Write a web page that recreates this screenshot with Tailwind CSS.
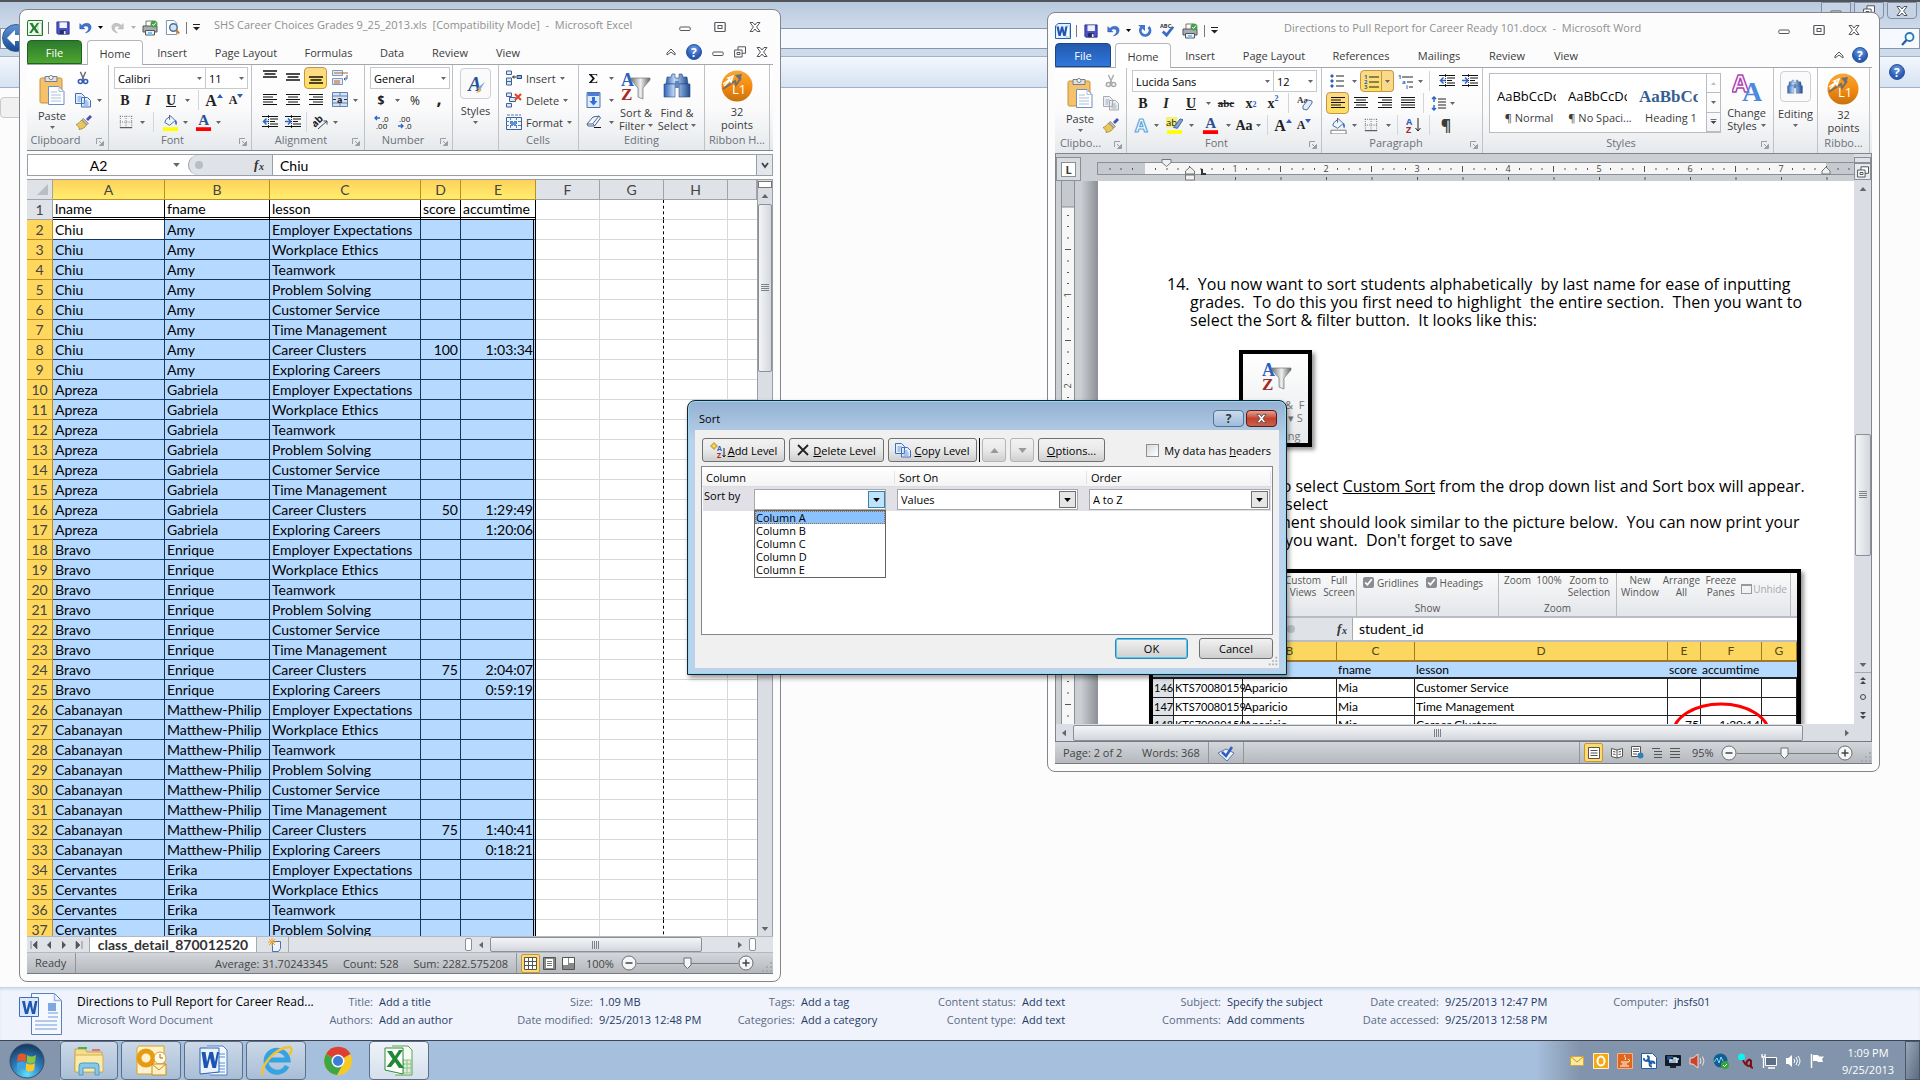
<!DOCTYPE html>
<html lang="en">
<head>
<meta charset="utf-8">
<title>Desktop</title>
<script src="https://cdn.jsdelivr.net/npm/@tailwindcss/browser@4"></script>
</head>
<body class="h-screen overflow-hidden bg-[#fcfcfc] font-['Open_Sans','Noto_Sans',sans-serif] text-[11px] leading-[13px] text-[#3b3b3b]">

<!-- shared gradients and ruler patterns -->
<svg class="absolute size-0" xmlns="http://www.w3.org/2000/svg">
 <defs>
  <linearGradient id="gFun" x1="0" x2="1"><stop offset="0" stop-color="#777"/><stop offset=".5" stop-color="#eee"/><stop offset="1" stop-color="#666"/></linearGradient>
  <linearGradient id="gBlue" x1="0" x2="1"><stop offset="0" stop-color="#2f62b5"/><stop offset=".4" stop-color="#c3dcf8"/><stop offset="1" stop-color="#1f4a94"/></linearGradient>
  <linearGradient id="gOr" x1="0" y1="0" x2="0" y2="1"><stop offset="0" stop-color="#f6a73a"/><stop offset=".5" stop-color="#f58b0d"/><stop offset="1" stop-color="#c9710f"/></linearGradient>
  <radialGradient id="gHelp" cx=".5" cy=".3"><stop offset="0" stop-color="#6fa0e8"/><stop offset="1" stop-color="#2b5cb3"/></radialGradient>
  <radialGradient id="gOrb" cx=".5" cy=".9" r=".9"><stop offset="0" stop-color="#5fe0ff"/><stop offset=".5" stop-color="#2c7bb8"/><stop offset="1" stop-color="#14365c"/></radialGradient>
  <pattern id="pRuler" width="91" height="12" patternUnits="userSpaceOnUse">
   <path d="M11.5 5v2M23 5v2M34 5v2M57 5v2M68 5v2M79.500 5v2" stroke="#555" stroke-width="1"/><path d="M45.500 3v6" stroke="#555"/>
  </pattern>
  <pattern id="pTabs" width="45.500" height="4" patternUnits="userSpaceOnUse"><path d="M.5 0v4" stroke="#555"/></pattern>
  <pattern id="pV" width="12" height="91" patternUnits="userSpaceOnUse">
   <path d="M5 11.500h2M5 22.500h2M5 34h2M5 57h2M5 68.500h2M5 79.500h2M3 45.500h6" stroke="#555"/>
  </pattern>
 </defs>
</svg>
<!-- icon library -->
<svg class="hidden" xmlns="http://www.w3.org/2000/svg">
 <symbol id="car" viewBox="0 0 5 3"><path d="M0 0h5L2.500 3z" fill="#666"/></symbol>
 <symbol id="launch" viewBox="0 0 8 8"><path d="M.5 6V.5H6" fill="none" stroke="#9a9da2"/><path d="M3 3l3 3M7.500 3.500v4h-4z" stroke="#9a9da2" fill="#9a9da2"/></symbol>
 <symbol id="xl" viewBox="0 0 16 16"><path d="M1 .5h14.500v15H.5V3z" fill="#eef7ea" stroke="#1e7a2d"/><path d="M11 3h3.500v11H11z" fill="#fff" stroke="#7fb77f" stroke-width=".6"/><path d="M2.500 3h3l2 3.500L10 3h2L8.800 8l3.200 5H9L7 9.600 4.500 13H2.200L5.600 8z" fill="#1f7e2f"/></symbol>
 <symbol id="wd" viewBox="0 0 16 16"><path d="M.5 3L3 .5h12.500v15H.5z" fill="#e6f0fc" stroke="#2560b4"/><path d="M11 3h3.500v11H11z" fill="#fff" stroke="#8ab0e0" stroke-width=".6"/><path d="M1.500 3.500h2.300l1 5.500 1.300-5.500h2L9.300 9l1.100-5.500h2.200L10.500 13H8.300L7 8l-1.400 5H3.500z" fill="#1f56b0"/></symbol>
 <symbol id="xlbig" viewBox="0 0 32 32"><path d="M9 1h16l4 4v25H12" fill="#f4fbf2" stroke="#5aa05a"/><path d="M20 15h8v13h-8z" fill="#dff0da" stroke="#8cc08a"/><path d="M20 19h8M20 23h8M24 15v13" stroke="#8cc08a"/><path d="M2 3h18v26L2 25z" fill="#fff" stroke="#2e8b3b"/><path d="M4 6h5l3 5 4-6h4l-6 8.500L21 23h-5l-4-6-4 5H3.500L9.500 14z" fill="#1f8a35"/></symbol>
 <symbol id="wdbig" viewBox="0 0 32 32"><path d="M9 1h16l4 4v25H12" fill="#f4f8ff" stroke="#4f7fc4"/><path d="M20 9h7M20 12h7M20 18h7M20 21h7M20 24h7M16 27h11" stroke="#8fb1e2" stroke-width="1.500"/><path d="M2 3h19v24L2 29z" fill="#eaf2fd" stroke="#2a62b8"/><path d="M3.500 7h4l1.500 10 2.500-10H15l2 10L19 7h2l-3 16h-3.500L12 13 9.500 23H6z" fill="#1c54b2"/></symbol>
 <symbol id="save" viewBox="0 0 16 16"><path d="M1 1h14v14H2l-1-1z" fill="#4a52c4" stroke="#2b2f86"/><path d="M4 1.500h8.500V8H4z" fill="#f0f3ff"/><path d="M4.500 10.500h7V15h-7z" fill="#222b62"/><path d="M9 11.500h2V15H9z" fill="#dfe4fa"/></symbol>
 <symbol id="undo" viewBox="0 0 16 16"><path d="M2 3v6h6L6 7c2-2 6-1.500 6 1.500 0 2-1.500 3.500-3.500 5 4-.5 6.500-3 6.500-6.500C15 2.500 9 1 4.500 5z" fill="#3f74cf" stroke="#2a58a8" stroke-width=".5"/></symbol>
 <symbol id="redo" viewBox="0 0 16 16"><path d="M14 3v6H8l2-2C8 5 4 5.500 4 8.500c0 2 1.500 3.500 3.500 5C3.500 13 1 10.500 1 7 1 2.500 7 1 11.500 5z" fill="#c3c5c8" stroke="#a5a8ac" stroke-width=".5"/></symbol>
 <symbol id="repeat" viewBox="0 0 16 16"><path d="M4 4a5.500 5.500 0 1 0 8-.5" fill="none" stroke="#3f74cf" stroke-width="3.200"/><path d="M0 1h8v7z" fill="#3f74cf"/></symbol>
 <symbol id="print" viewBox="0 0 16 16"><path d="M4 1h7v6H4z" fill="#fff" stroke="#777"/><path d="M1 6h14v6H1z" fill="#a9adb3" stroke="#555"/><path d="M3.500 10.500h9V15h-9z" fill="#e8f1fb" stroke="#555"/><path d="M6 12h4v3H6z" fill="#7fc4ef"/><circle cx="12" cy="4" r="3.500" fill="#44a047"/><path d="M10.300 4l1.300 1.500L14 2.500" stroke="#fff" fill="none"/></symbol>
 <symbol id="preview" viewBox="0 0 16 16"><path d="M1.500.5h8l3 3v12h-11z" fill="#fff" stroke="#7a8aa6"/><circle cx="9" cy="8" r="4" fill="#cfe6fa" stroke="#4e6c96" stroke-width="1.500"/><path d="M12 11l3 3.500" stroke="#c8832c" stroke-width="2.500"/></symbol>
 <symbol id="abc" viewBox="0 0 16 16"><text x="0" y="5" font-size="6" font-weight="700" fill="#333">ABC</text><path d="M3 9l4 4 7-9" fill="none" stroke="#3a6bc4" stroke-width="3"/></symbol>
 <symbol id="paste" viewBox="0 0 26 30"><rect x="1" y="3" width="22" height="25" rx="1.500" fill="#f3c26a" stroke="#c98f36"/><path d="M6 1.500h12v5H6z" fill="#dfe1e4" stroke="#7a7d82"/><circle cx="12" cy="2.500" r="2" fill="#fff" stroke="#7a7d82"/><path d="M9.500 11.500h10.500l5 5v13H9.500z" fill="#fff" stroke="#6f8fbe"/><path d="M20 11.500v5h5M12 17h6M12 20h10M12 23h10M12 26h10" fill="none" stroke="#a9bddc"/></symbol>
 <symbol id="cut" viewBox="0 0 16 16"><path d="M5 1l4 9M11 1L7 10" stroke="currentColor" stroke-width="1.500"/><circle cx="5" cy="12" r="2.300" fill="none" stroke="var(--c,#2e5cb8)" stroke-width="1.800"/><circle cx="11" cy="12" r="2.300" fill="none" stroke="var(--c,#2e5cb8)" stroke-width="1.800"/></symbol>
 <symbol id="copy" viewBox="0 0 16 16"><path d="M.5 1.500h6l3 3v7h-9zM6.500 5.500h6l3 3v6.500h-9z" fill="#e7effb" stroke="var(--c,#3d6fc0)"/><path d="M2.500 5h4M2.500 7h3M2.500 9h3M8.500 9h4M8.500 11h5M8.500 13h5" stroke="var(--c,#6b96d8)"/></symbol>
 <symbol id="brush" viewBox="0 0 16 16"><path d="M10 5l4-4 2 2-4 4z" fill="#4b4fae"/><path d="M7.500 4.500l5 5-2 1.500-5-5z" fill="#bbb" stroke="#555" stroke-width=".5"/><path d="M5.500 6l5 5C9 14 5 15.500 3 15.500 4 14 1 11 0 10.500 2 10 4 8 5.500 6z" fill="#e8c85a" stroke="#8a6d1c" stroke-width=".6"/></symbol>
 <symbol id="bord" viewBox="0 0 16 16"><path d="M1 1.500h14M1 8h14M1.500 1v13M8 1v13M14.500 1v13" stroke="#555" stroke-dasharray="1 1.500"/><path d="M1 14.500h14" stroke="#222"/></symbol>
 <symbol id="bucket" viewBox="0 0 18 18"><path d="M4 6l5-4 5 5-6 5-5-3z" fill="#eef4fb" stroke="#3c68a8"/><path d="M14 6c2 1 2.500 4 1 6-1-1-1.500-3-1-6z" fill="#2f6bc0"/><path d="M8 1v5" stroke="#555"/><path d="M1 14h16v4H1z" fill="var(--c,#ff0)" stroke="var(--s,none)"/></symbol>
 <symbol id="fcol" viewBox="0 0 18 18"><text x="3.500" y="12" font-family="Liberation Serif" font-weight="700" font-size="16" fill="#2c4f93">A</text><path d="M1 14h16v4H1z" fill="#f00"/></symbol>
 <symbol id="vtop" viewBox="0 0 14 10"><path d="M0 1h14M1.500 4h11M0 7h14" stroke="#111" stroke-width="1.500"/></symbol>
 <symbol id="al" viewBox="0 0 14 12"><path d="M0 .5h14M0 3h10M0 5.500h14M0 8h10M0 10.500h14" stroke="#111"/></symbol>
 <symbol id="ac" viewBox="0 0 14 12"><path d="M0 .5h14M2 3h10M0 5.500h14M2 8h10M0 10.500h14" stroke="#111"/></symbol>
 <symbol id="ar" viewBox="0 0 14 12"><path d="M0 .5h14M4 3h10M0 5.500h14M4 8h10M0 10.500h14" stroke="#111"/></symbol>
 <symbol id="aj" viewBox="0 0 14 12"><path d="M0 .5h14M0 3h14M0 5.500h14M0 8h14M0 10.500h14" stroke="#111"/></symbol>
 <symbol id="wrap" viewBox="0 0 16 16"><path d="M.5.5h10v5H.5zM.5 8.500h10v6H.5z" fill="#e3ecf8" stroke="#7f98bb"/><path d="M2 3h14M2 11h6M2 13h6" stroke="#b0622e"/><path d="M15 5v4h-3m1.500-1.500L12 9l1.500 1.500" fill="none" stroke="#3c5f9c"/></symbol>
 <symbol id="merge" viewBox="0 0 16 16"><path d="M.5.5h15v14H.5z" fill="#d5e3f5" stroke="#5f81b5"/><path d="M.5 4h15M.5 11h15M8 0v4M8 11v4" stroke="#5f81b5"/><text x="5" y="10.500" font-size="9" font-weight="700" fill="#222">a</text><path d="M1 7.500h3M12 7.500h3" stroke="#333"/></symbol>
 <symbol id="ind0" viewBox="0 0 16 14"><path d="M0 1.500h16M8 4h8M8 6.500h5M8 9h8M0 11.500h16" stroke="#111"/><path d="M7 6.500H2m2.500-3L1.500 6.500l3 3" stroke="#2f66c4" stroke-width="1.500" fill="none"/><path d="M6.500 0v14" stroke="#333" stroke-dasharray="1 1"/></symbol>
 <symbol id="ind1" viewBox="0 0 16 14"><path d="M0 1.500h16M8 4h8M8 6.500h5M8 9h8M0 11.500h16" stroke="#111"/><path d="M0 6.500h5m-2-3l3 3-3 3" stroke="#2f66c4" stroke-width="1.500" fill="none"/><path d="M6.500 0v14" stroke="#333" stroke-dasharray="1 1"/></symbol>
 <symbol id="orient" viewBox="0 0 16 16"><text transform="rotate(-45 7 9)" x="0" y="9" font-size="10" font-weight="700" fill="#222">ab</text><path d="M5 15l9-8m-3.500 0H14v3.500" fill="none" stroke="#444"/></symbol>
 <symbol id="dec0" viewBox="0 0 16 14"><path d="M6 3H1m2-2L1 3l2 2" stroke="#2f66c4" stroke-width="1.300" fill="none"/><text x="8" y="6.500" font-size="8" fill="#111">.0</text><text x="2" y="14" font-size="8" fill="#111">.00</text></symbol>
 <symbol id="dec1" viewBox="0 0 16 14"><path d="M1 11h5m-2-2l2 2-2 2" stroke="#2f66c4" stroke-width="1.300" fill="none"/><text x="2" y="6.500" font-size="8" fill="#111">.00</text><text x="8" y="14" font-size="8" fill="#111">.0</text></symbol>
 <symbol id="styA" viewBox="0 0 18 18"><text x="2" y="15" font-family="Liberation Serif" font-style="italic" font-weight="700" font-size="18" fill="#24519c">A</text><path d="M10 13l7-6-4 7z" fill="#7aa7e4"/><path d="M9 17c3 0 4-1 5-3l-2-1c-1 1-2 3-3 4z" fill="#e0b64a"/></symbol>
 <symbol id="cins" viewBox="0 0 16 16"><path d="M.5 1h5v3.500h-5zM.5 8h5v3.500h-5zM.5 11.500h5V15h-5z" fill="#dbe7f7" stroke="#3e5f95"/><path d="M11 5.500h4.500v3H11z" fill="#8db4ea" stroke="#22488a"/><path d="M10 7H7m1-1.500L6.500 7 8 8.500" stroke="#111" fill="none"/></symbol>
 <symbol id="cdel" viewBox="0 0 16 16"><path d="M.5 1h5v3.500h-5zM3.500 5.500h6v4h-6zM.5 11.500h5V15h-5z" fill="#dbe7f7" stroke="#3e5f95"/><path d="M9 2l6 6M15 2L9 8" stroke="#e3401f" stroke-width="2"/></symbol>
 <symbol id="cfmt" viewBox="0 0 16 16"><path d="M.5 3.500h15v12H.5z" fill="#f1f6fc" stroke="#3e5f95"/><path d="M0 7.500h16M0 11.500h16M4.500 3v13M10.500 3v13M1 1h14" stroke="#5a7fb8" stroke-dasharray="3 1"/><path d="M5 8h5v3H5z" fill="#5a92e0"/></symbol>
 <symbol id="sum" viewBox="0 0 12 12"><path d="M1 1h9v3L9 2H4l3.500 4L4 10h5l1-2v3H1v-.5L5 6 1 1.500z" fill="#111"/></symbol>
 <symbol id="filld" viewBox="0 0 14 16"><path d="M.5.5h13v15H.5z" fill="#dfeafa" stroke="#4c74b4"/><path d="M1 1h12v3H1z" fill="#4c7fd0"/><path d="M5.500 5h3v4H11l-4 4.500L3 9h2.500z" fill="#2f6fd6"/></symbol>
 <symbol id="erase" viewBox="0 0 16 14"><path d="M1 9l6-7 6-1 1.500 2-6 8H2z" fill="#f4f7fc" stroke="#4b6490"/><path d="M1 9h5.500l6.500-8M7 9l1.500 2" fill="none" stroke="#4b6490"/><path d="M8 12.500h7" stroke="#111"/></symbol>
 <symbol id="sort" viewBox="0 0 30 30"><text x="0" y="14" font-family="Liberation Serif" font-weight="700" font-size="18" fill="#2b5fc0">A</text><text x="0" y="28" font-family="Liberation Serif" font-weight="700" font-size="17" fill="#a32a22">Z</text><path d="M10 6h19v2l-7 8v11l-5-2V16l-7-8z" fill="url(#gFun)" stroke="#777" stroke-width=".7"/></symbol>
 <symbol id="bino" viewBox="0 0 28 28"><path d="M4 5h4l1-3h3v4h4V2h3l1 3h4l1 7H3z" fill="url(#gBlue)" stroke="#284a80" stroke-width=".6"/><path d="M1 12h11v13H1zM16 12h11v13H16z" fill="url(#gBlue)" stroke="#284a80" stroke-width=".6"/><path d="M12 9h4v7h-4z" fill="#5f86c2"/></symbol>
 <symbol id="l1" viewBox="0 0 32 32"><circle cx="16" cy="16" r="15.500" fill="url(#gOr)"/><path d="M2 19L14 11l1 4 5-7" fill="none" stroke="#70706e" stroke-width="2"/><path d="M14 5l7-1-2 7z" fill="#70706e"/><path d="M2 14l7-5-2-1 5-2-2 6-1-2-6 6" fill="none" stroke="#fff" stroke-width="1.500"/><text x="11" y="24" font-size="13" fill="#fff">L1</text></symbol>
 <symbol id="help" viewBox="0 0 16 16"><circle cx="8" cy="8" r="7.500" fill="url(#gHelp)" stroke="#2a55a5"/><text x="5" y="12.500" font-size="12" font-weight="700" fill="#fff">?</text></symbol>
 <symbol id="chev" viewBox="0 0 10 8"><path d="M1 5l4-4 4 4v2L5 4 1 7z" fill="#fff" stroke="#555"/></symbol>
 <symbol id="wmin" viewBox="0 0 12 12"><rect x=".8" y="6" width="10.400" height="3.500" rx="1" fill="#fff" stroke="#53565c"/></symbol>
 <symbol id="wmax" viewBox="0 0 12 12"><rect x=".8" y="1.500" width="10.400" height="9" rx="1" fill="#fff" stroke="#53565c" stroke-width="1.200"/><rect x="4" y="4.500" width="4" height="3" fill="#fff" stroke="#53565c"/></symbol>
 <symbol id="wres" viewBox="0 0 12 12"><path d="M4 .8h7.500v6.500H4z" fill="#fff" stroke="#53565c"/><path d="M.6 4h7.500v7H.6z" fill="#fff" stroke="#53565c"/><path d="M3 6.500h3v2H3z" fill="#fff" stroke="#53565c"/></symbol>
 <symbol id="wx" viewBox="0 0 12 12"><path d="M1 1.500h3L6 4l2-2.500h3L7.600 6l3.400 4.500H8L6 8l-2 2.500H1L4.400 6z" fill="#fff" stroke="#53565c"/></symbol>
 <symbol id="bul" viewBox="0 0 14 14"><path d="M1 1h2v2H1zM1 6h2v2H1zM1 11h2v2H1z" fill="#2f5fb8" stroke="#2f5fb8"/><path d="M6 2h8M6 7h8M6 12h8" stroke="#222"/></symbol>
 <symbol id="num" viewBox="0 0 15 15"><g font-size="6" font-weight="700" fill="#2f5fb8"><text y="5">1</text><text y="10">2</text><text y="15">3</text></g><path d="M5 3h10M5 8h10M5 13h10" stroke="#222"/></symbol>
 <symbol id="mul" viewBox="0 0 16 15"><g font-size="6" font-weight="700" fill="#2f5fb8"><text y="5">1</text><text x="4" y="10">a</text><text x="8" y="15">i</text></g><path d="M4 3h11M9 8h6M11 13h4" stroke="#222"/></symbol>
 <symbol id="spc" viewBox="0 0 15 15"><path d="M3 1v5M3 9v5M1 3l2-2 2 2M1 12l2 2 2-2" stroke="#2f66c4" fill="none" stroke-width="1.500"/><path d="M7 3h8M7 6h8M7 9h8M7 12h8" stroke="#222"/></symbol>
 <symbol id="az" viewBox="0 0 15 16"><text y="8" font-size="9" font-weight="700" fill="#2b5fc0">A</text><text y="16" font-size="9" font-weight="700" fill="#a32a22">Z</text><path d="M12 1v13m-2.500-3l2.500 3 2.500-3" stroke="#222" fill="none"/></symbol>
 <symbol id="fx" viewBox="0 0 14 14"><text x="1" y="11" font-family="Liberation Serif" font-style="italic" font-weight="700" font-size="13" fill="#333">f</text><text x="6" y="12" font-family="Liberation Serif" font-style="italic" font-weight="700" font-size="10" fill="#333">x</text></symbol>
 <symbol id="mag" viewBox="0 0 14 14"><circle cx="8.500" cy="5" r="4" fill="none" stroke="#2a7ab8" stroke-width="1.800"/><path d="M5.500 8L1 13" stroke="#2a5ba0" stroke-width="2.200"/></symbol>
 <symbol id="minus" viewBox="0 0 16 16"><circle cx="8" cy="8" r="7" fill="#f5f6f7" stroke="#6b6e73"/><path d="M4.500 8h7" stroke="#444" stroke-width="1.500"/></symbol>
 <symbol id="plus" viewBox="0 0 16 16"><circle cx="8" cy="8" r="7" fill="#f5f6f7" stroke="#6b6e73"/><path d="M4.500 8h7M8 4.500v7" stroke="#444" stroke-width="1.500"/></symbol>
 <symbol id="grip" viewBox="0 0 8 8"><path d="M.5 0v8M2.500 0v8M4.500 0v8M6.500 0v8" stroke="#7d8188"/></symbol>
 <symbol id="size" viewBox="0 0 12 12"><path d="M9 1h2v2H9zM5 5h2v2H5zM9 5h2v2H9zM1 9h2v2H1zM5 9h2v2H5zM9 9h2v2H9z" fill="#a8abb0"/></symbol>
 <symbol id="docW" viewBox="0 0 44 42"><path d="M12.500.5h23l7 7v34h-30z" fill="#f5f9ff" stroke="#5b7fb8"/><path d="M35.500.5v7h7M16 28h22M16 32h22M16 36h22M29 20h10M29 24h10" fill="none" stroke="#9db9e4" stroke-width="1.500"/><path d="M29 10h8v8h-8z" fill="#7ea8e0"/><path d="M.5 4.500h19v19H.5z" fill="#dce9fa" stroke="#3b71c0"/><path d="M3 8h3l1.500 9L10 8h2.500l1.500 9 2-9h2.500L16 21h-3l-2-8-2 8H6z" fill="#1f56b0"/></symbol>
</svg>

<div class="flex h-screen flex-col">

<!-- file browser behind the documents -->
<main class="relative flex min-h-0 flex-1 flex-col border-t-2 border-[#50535a]">
 <div class="h-[26px] bg-linear-to-b from-[#b9c9dd] to-[#cddaea]"></div>
 <div class="flex h-[28px] justify-end bg-[#cddbeb]">
  <input aria-label="Address" class="h-[21px] min-w-0 flex-1 border border-[#8796aa] bg-[#f6f9fd]">
  <label class="ml-2 flex h-[21px] w-[290px] items-center justify-end border border-[#8796aa] bg-[#f6f9fd] pr-1"><input aria-label="Search" class="w-[200px]"><svg class="size-[14px]"><use href="#mag"/></svg></label>
 </div>
 <div class="flex h-[32px] items-center justify-end border-y border-[#9fb1cb] bg-linear-to-b from-[#f3f7fd] to-[#d6e2f3] pr-[15px]"><svg class="size-4"><use href="#help"/></svg></div>
 <div class="flex-1 pt-[9px]"><div class="h-[21px] w-[100px] rounded-sm border border-[#c9c9c9] bg-[#f1f1f1]"></div></div>
 <button aria-label="Back" class="absolute top-[22px] left-[2px] size-[28px] rounded-full border border-[#38587f] bg-linear-to-b from-[#5f93d6] to-[#134c96]"><svg class="size-[26px]" viewBox="0 0 26 26"><path d="M4 13l8-8v5h10v6H12v5z" fill="#fff"/></svg></button>
 <div class="absolute top-0 right-[3px] flex gap-[3px]">
  <button aria-label="Minimize" class="flex h-[17px] w-[30px] items-center justify-center rounded-b-sm border border-[#7f8ea5] bg-[#c5d3e4]"><svg class="size-3"><use href="#wmin"/></svg></button>
  <button aria-label="Restore" class="flex h-[17px] w-[30px] items-center justify-center rounded-b-sm border border-[#7f8ea5] bg-[#c5d3e4]"><svg class="size-3"><use href="#wres"/></svg></button>
  <button aria-label="Close" class="flex h-[17px] w-[30px] items-center justify-center rounded-b-sm border border-[#7f8ea5] bg-[#c5d3e4]"><svg class="size-3"><use href="#wx"/></svg></button>
 </div>
 <footer class="flex h-[53px] items-start border-t border-[#c5d5e6] bg-[#f0f3fb] pt-[5px] pl-[19px] text-[11px] leading-[18px] text-[#1e3a66] shadow-[inset_0_2px_2px_#d5e2ef] [&_dt]:text-right [&_dt]:text-[#5a6b85] [&_dl]:grid [&_dl]:shrink-0 [&_dl]:gap-x-[6px] [&_dl]:whitespace-nowrap">
  <svg class="h-[42px] w-[44px] shrink-0"><use href="#docW"/></svg>
  <div class="w-[250px] shrink-0 pl-[14px] whitespace-nowrap"><p class="text-[12px] text-black">Directions to Pull Report for Career Read...</p><p class="text-[#5a6b85]">Microsoft Word Document</p></div>
  <dl class="w-[187px] grid-cols-[60px_1fr]"><dt>Title:</dt><dd>Add a title</dd><dt>Authors:</dt><dd>Add an author</dd></dl>
  <dl class="w-[228px] grid-cols-[93px_1fr]"><dt>Size:</dt><dd>1.09 MB</dd><dt>Date modified:</dt><dd>9/25/2013 12:48 PM</dd></dl>
  <dl class="w-[170px] grid-cols-[67px_1fr]"><dt>Tags:</dt><dd>Add a tag</dd><dt>Categories:</dt><dd>Add a category</dd></dl>
  <dl class="w-[228px] grid-cols-[118px_1fr]"><dt>Content status:</dt><dd>Add text</dd><dt>Content type:</dt><dd>Add text</dd></dl>
  <dl class="w-[220px] grid-cols-[95px_1fr]"><dt>Subject:</dt><dd>Specify the subject</dd><dt>Comments:</dt><dd>Add comments</dd></dl>
  <dl class="w-[240px] grid-cols-[93px_1fr]"><dt>Date created:</dt><dd>9/25/2013 12:47 PM</dd><dt>Date accessed:</dt><dd>9/25/2013 12:58 PM</dd></dl>
  <dl class="grid-cols-[82px_1fr]"><dt>Computer:</dt><dd>jhsfs01</dd></dl>
 </footer>
</main>

<!-- taskbar -->
<nav class="flex h-[40px] shrink-0 items-stretch border-t border-[#3c4654] bg-[#a6bfdc] [&>button]:flex [&>button]:shrink-0 [&>button]:items-center [&>button]:justify-center">
 <button aria-label="Start" class="w-[60px] bg-[#8496ad] pr-[6px]"><svg class="size-[36px]" viewBox="0 0 36 36"><circle cx="18" cy="18" r="17" fill="url(#gOrb)" stroke="#3a4c66"/><path d="M9 12c3-2 5-2 8 0v7c-3-2-6-2-9 0z" fill="#e8552b"/><path d="M18 12c3 2 6 2 9 0l-1 7c-3 2-6 2-8 0z" fill="#8cc63f"/><path d="M8 20c3-2 6-2 8 0v7c-2-2-5-2-8 0z" fill="#3fa1e0"/><path d="M17 20c3 2 6 2 9 0l-1 7c-3 2-6 2-8 0z" fill="#fbc72d"/></svg></button>
 <button aria-label="File browser" class="mr-[3px] w-[58px] rounded-sm border border-[#5c6f8a] bg-linear-to-b from-[#ccd9e8] to-[#a9bed6]"><svg class="size-[34px]" viewBox="0 0 34 34"><path d="M3 5h10l2 3h15v20H3z" fill="#f6dd8b" stroke="#c8a24a"/><path d="M6 3h9v2H6z" fill="#4caf50"/><path d="M20 5h8v2h-8z" fill="#e57373"/><path d="M3 11h28v17H3z" fill="#fbeaa8" stroke="#cfae57"/><path d="M7 31V22q0-3 3-3h14q3 0 3 3v9h-4v-7H11v7z" fill="#86c8ea" stroke="#4b9cc9"/></svg></button>
 <button aria-label="Mail" class="mr-[3px] w-[60px] rounded-sm border border-[#5c6f8a] bg-linear-to-b from-[#ccd9e8] to-[#a9bed6]"><svg class="size-[34px]" viewBox="0 0 34 34"><path d="M5 2h25v28H3V4z" fill="#fff3cd" stroke="#e0a01c"/><circle cx="12" cy="14" r="7" fill="none" stroke="#e79a12" stroke-width="5"/><circle cx="26" cy="14" r="6" fill="#fffbe9" stroke="#dba02a"/><path d="M26 10v4h3" stroke="#a06a10" fill="none"/><path d="M18 20h14v11H18z" fill="#fff0c4" stroke="#c88d1a"/><path d="M18 20l7 6 7-6" fill="none" stroke="#c88d1a"/></svg></button>
 <button aria-label="Word" class="mr-[3px] w-[59px] rounded-sm border border-[#5c6f8a] bg-linear-to-b from-[#ccd9e8] to-[#a9bed6]"><svg class="size-[32px]"><use href="#wdbig"/></svg></button>
 <button aria-label="Internet" class="mr-[3px] w-[60px] rounded-sm border border-[#5c6f8a] bg-linear-to-b from-[#ccd9e8] to-[#a9bed6]"><svg class="size-[34px]" viewBox="0 0 34 34"><path d="M28 22a11 11 0 1 1 1-6H10" fill="none" stroke="#35a3e2" stroke-width="5"/><path d="M4 31C-1 25 16 3 31 3c3 2 1 6-1 8" fill="none" stroke="#f3c233" stroke-width="2.500"/></svg></button>
 <button aria-label="Chrome" class="mr-[3px] w-[57px]"><svg class="size-[30px]" viewBox="0 0 30 30"><circle cx="15" cy="15" r="14" fill="#f6c927"/><path d="M15 15L3 8a14 14 0 0 1 24.500 0z" fill="#dc3f34"/><path d="M3 8a14 14 0 0 0 11 21l6-11-5-3z" fill="#3fa648"/><circle cx="15" cy="15" r="6.500" fill="#fff"/><circle cx="15" cy="15" r="5" fill="#3c7ddb"/></svg></button>
 <button aria-label="Excel" class="w-[60px] rounded-sm border border-[#5c6f8a] bg-linear-to-b from-[#eef3f8] to-[#d5e0ec]"><svg class="size-[32px]"><use href="#xlbig"/></svg></button>
 <div class="flex flex-1 items-center justify-end bg-linear-to-r from-[#a6bfdc] from-75% to-[#8294ab] to-78% pr-[10px]">
  <div class="flex items-center gap-2 [&_svg]:size-4">
   <svg viewBox="0 0 16 16"><path d="M1.500 3.500h13v9h-13z" fill="#fbe9a2" stroke="#d0a83b"/><path d="M1.500 3.500L8 9l6.500-5.500" fill="none" stroke="#c2942b"/></svg>
   <svg viewBox="0 0 16 16"><path d="M.5.5h15v15H.5z" fill="#f5a817" stroke="#fff1c4"/><ellipse cx="8" cy="8" rx="3.500" ry="4.500" fill="none" stroke="#fff" stroke-width="2"/></svg>
   <svg viewBox="0 0 16 16"><path d="M.5.5h15v15H.5z" fill="#e2661a" stroke="#f6b184"/><path d="M4 9h7c2 0 2-3 0-2.500M5 11h5M3 13h9M8 2c-2 2 2 2 0 5" fill="none" stroke="#fff"/></svg>
   <svg viewBox="0 0 16 16"><path d="M.5.5h11l4 4v11H.5z" fill="#fff" stroke="#1e5fa8"/><path d="M6 6l5 5" stroke="#1e5fa8" stroke-width="2.500"/><path d="M3 5a2.500 2.500 0 1 0 3-2M13.500 11a2.500 2.500 0 1 0-2.500 2.500" stroke="#1e5fa8" stroke-width="1.800" fill="none"/></svg>
   <svg viewBox="0 0 16 16"><path d="M.5 2.500h15v10H.5z" fill="#0a1c33" stroke="#1a1a1a"/><path d="M2 4h6M2 6h4" stroke="#3f7fd0"/><path d="M5 10V7h2v3M9 10V5h2v5M12 10V6h2" stroke="#d9e8f8" stroke-width="1.500" fill="none"/><path d="M5 14h6" stroke="#222" stroke-width="2"/></svg>
   <svg viewBox="0 0 16 16"><path d="M1 5h3l5-4v14l-5-4H1z" fill="#c8452a" stroke="#f5d9cf"/><path d="M11 5q2 3 0 6M13.500 3.500q3 4.500 0 9" fill="none" stroke="#eadfdf"/></svg>
   <svg viewBox="0 0 16 16"><circle cx="7.500" cy="7.500" r="7" fill="#0f5f93"/><path d="M1 9l3-4 2 5 2-6 2 4" stroke="#8fd4f5" fill="none"/><circle cx="12" cy="12" r="4" fill="#36a33c"/><path d="M10 12l1.500 1.500L14 11" stroke="#fff" fill="none"/></svg>
   <svg viewBox="0 0 16 16"><path d="M5 6l4 6M14 7c-5-1-6 6-2 6 2 0 2-4 2-6v7l2 1" stroke="#7d0f16" stroke-width="2" fill="none"/><circle cx="4.500" cy="4" r="3.500" fill="#12f0f0"/></svg>
   <svg viewBox="0 0 16 16"><path d="M4.500 4.500h11v8h-11z" fill="#5d6d83" stroke="#fff"/><path d="M7 15h7M2.500 5v10M1 1v3h3V1" stroke="#fff" fill="none" stroke-width="1.300"/></svg>
   <svg viewBox="0 0 16 16"><path d="M1 5h2.500L7 2v12l-3.500-3H1z" fill="#fff"/><path d="M9 6q1.500 2 0 4M11 4q3 4 0 8M13 3q4 5 0 10" fill="none" stroke="#fff"/></svg>
   <svg viewBox="0 0 16 16"><path d="M2.500 1v14" stroke="#fff" stroke-width="1.500"/><path d="M4 2h5l1 1.500h5L13 6l1 3H9L8 8H4z" fill="#fff"/></svg>
  </div>
  <time class="ml-4 w-[54px] text-center leading-[17px] whitespace-nowrap text-white">1:09 PM<br>9/25/2013</time>
 </div>
 <button aria-label="Show desktop" class="w-[15px] border border-[#49576b] bg-linear-to-br from-[#9aa8ba] to-[#5d6b7f]"></button>
</nav>
</div>

<!-- Excel window -->
<section class="absolute top-[9px] left-[19px] flex h-[973px] w-[762px] flex-col rounded-lg border border-[#83868b] bg-[#fcfcfc] px-[7px] pb-[7px]">
 <header class="flex h-[30px] shrink-0 items-center pt-[5px]">
  <div class="flex items-center">
   <button aria-label="Excel menu"><svg class="size-4"><use href="#xl"/></svg></button><i class="mx-[5px] h-3 w-px bg-[#777]"></i>
   <button aria-label="Save" class="ml-[2px]"><svg class="size-[14px]"><use href="#save"/></svg></button>
   <button aria-label="Undo" class="ml-2 flex items-center gap-[6px]"><svg class="size-[14px]"><use href="#undo"/></svg><svg class="h-[3px] w-[5px] brightness-0"><use href="#car"/></svg></button>
   <button aria-label="Redo" class="ml-2 flex items-center gap-[6px]"><svg class="size-[14px]"><use href="#redo"/></svg><svg class="h-[3px] w-[5px] opacity-50"><use href="#car"/></svg></button>
   <button aria-label="Print" class="ml-[6px]"><svg class="size-4"><use href="#print"/></svg></button>
   <button aria-label="Preview" class="ml-[7px]"><svg class="size-[15px]"><use href="#preview"/></svg></button><i class="mx-[6px] h-3 w-px bg-[#777]"></i>
   <button aria-label="Customize"><svg class="h-[7px] w-[7px]" viewBox="0 0 7 7"><path d="M0 .5h7" stroke="#222"/><path d="M0 3h7L3.500 6.500z" fill="#222"/></svg></button>
  </div>
  <h1 class="ml-[14px] pb-[6px] whitespace-pre text-[#909090]">SHS Career Choices Grades 9_25_2013.xls  [Compatibility Mode]  -  Microsoft Excel</h1>
  <div class="ml-auto flex gap-[23px] pr-[12px] pb-[1px]"><button aria-label="Minimize"><svg class="size-3"><use href="#wmin"/></svg></button><button aria-label="Maximize"><svg class="size-3"><use href="#wmax"/></svg></button><button aria-label="Close"><svg class="size-3"><use href="#wx"/></svg></button></div>
 </header>
 <div role="tablist" class="flex h-[24px] shrink-0 items-stretch [&>button]:shrink-0">
  <button class="mr-[5px] w-[55px] rounded-t-sm border border-[#1c6425] bg-linear-to-b from-[#2c7a2c] to-[#4da52f] text-white">File</button>
  <button class="relative z-10 -mb-px w-[56px] rounded-t-sm border border-b-0 border-[#b3b7bc] bg-white">Home</button>
  <button class="w-[58px]">Insert</button><button class="w-[90px]">Page Layout</button><button class="w-[75px]">Formulas</button><button class="w-[52px]">Data</button><button class="w-[64px]">Review</button><button class="w-[52px]">View</button>
  <div class="ml-auto flex items-center gap-[10px] pr-[5px]"><button aria-label="Collapse ribbon"><svg class="h-2 w-[10px]"><use href="#chev"/></svg></button><button aria-label="Help"><svg class="size-4"><use href="#help"/></svg></button><button aria-label="Minimize book"><svg class="size-3"><use href="#wmin"/></svg></button><button aria-label="Restore book"><svg class="size-3"><use href="#wres"/></svg></button><button aria-label="Close book"><svg class="size-3"><use href="#wx"/></svg></button></div>
 </div>
 <!-- ribbon -->
 <div class="flex h-[87px] shrink-0 border-y border-[#a3a7ad] border-b-[#83878d] bg-linear-to-b from-white via-[#fbfbfc] to-[#e6e9ec] [&_button]:flex [&_button]:shrink-0 [&_button]:items-center [&_button]:justify-center [&_h2]:mt-auto [&_h2]:h-[17px] [&_h2]:text-center [&_h2]:text-[#6b7077] [&>div]:relative [&>div]:flex [&>div]:shrink-0 [&>div]:flex-col [&>div]:border-r [&>div]:border-[#bfc3c8] [&>div]:pt-[2px]">
  <div class="w-[82px]">
   <div class="flex"><button class="mt-[4px] ml-[8px] w-[34px] flex-col"><svg class="h-[30px] w-[26px]"><use href="#paste"/></svg><span class="mt-1">Paste</span><svg class="mt-1 h-[3px] w-[5px]"><use href="#car"/></svg></button>
    <div class="ml-[6px] flex flex-col"><button aria-label="Cut" class="h-[22px] w-[16px]"><svg class="size-[14px] text-[#667]"><use href="#cut"/></svg></button><button aria-label="Copy" class="h-[22px] gap-[6px]"><svg class="size-4"><use href="#copy"/></svg><svg class="h-[3px] w-[5px]"><use href="#car"/></svg></button><button aria-label="Format painter" class="h-[22px] w-[18px]"><svg class="size-4"><use href="#brush"/></svg></button></div></div>
   <h2 class="pr-6">Clipboard</h2><svg class="absolute right-1 bottom-[4px] size-2"><use href="#launch"/></svg>
  </div>
  <div class="w-[143px] pl-[5px]">
   <div class="flex h-[22px] text-black"><label class="flex w-[92px] items-center justify-between border border-[#c6c9ce] bg-white px-[3px]"><input aria-label="Font" value="Calibri" class="w-[60px]"><svg class="h-[3px] w-[5px]"><use href="#car"/></svg></label><label class="-ml-px flex w-[43px] items-center justify-between border border-[#c6c9ce] bg-white px-[3px]"><input aria-label="Size" value="11" class="w-[24px]"><svg class="h-[3px] w-[5px]"><use href="#car"/></svg></label></div>
   <div class="flex h-[22px] items-center font-['Liberation_Serif',serif] text-[14px] text-[#222]"><button class="w-[22px] font-bold">B</button><button class="w-[24px] font-bold italic">I</button><button class="w-[22px] font-bold underline">U</button><button aria-label="Underline styles" class="w-[11px]"><svg class="h-[3px] w-[5px]"><use href="#car"/></svg></button><i class="mr-[4px] ml-[5px] h-5 w-px bg-[#d2d5d9]"></i><button class="w-[22px] font-bold"><span class="text-[16px]">A</span><svg class="mb-2 h-1 w-[6px]" viewBox="0 0 6 4"><path d="M0 4h6L3 0z" fill="#2f5fb8"/></svg></button><button class="w-[22px] font-bold"><span class="text-[12px]">A</span><svg class="mb-2 h-1 w-[6px]" viewBox="0 0 6 4"><path d="M0 0h6L3 4z" fill="#2f5fb8"/></svg></button></div>
   <div class="flex h-[22px] items-center"><button aria-label="Borders" class="w-[24px]"><svg class="size-[14px]"><use href="#bord"/></svg></button><button aria-label="Border styles" class="w-2"><svg class="h-[3px] w-[5px]"><use href="#car"/></svg></button><i class="mr-[6px] ml-[7px] h-5 w-px bg-[#d2d5d9]"></i><button aria-label="Fill" class="w-5"><svg class="size-[17px]"><use href="#bucket"/></svg></button><button aria-label="Fill colors" class="w-[10px]"><svg class="h-[3px] w-[5px]"><use href="#car"/></svg></button><button aria-label="Font color" class="w-[26px]"><svg class="size-[17px]"><use href="#fcol"/></svg></button><svg class="h-[3px] w-[5px]"><use href="#car"/></svg></div>
   <h2 class="pr-5">Font</h2><svg class="absolute right-1 bottom-[4px] size-2"><use href="#launch"/></svg>
  </div>
  <div class="w-[113px] pl-[6px] [&_svg]:shrink-0">
   <div class="flex h-[22px]"><button aria-label="Top align" class="w-[23px] pb-[6px]"><svg class="h-[10px] w-[14px]"><use href="#vtop"/></svg></button><button aria-label="Middle align" class="w-[23px]"><svg class="h-[10px] w-[14px]"><use href="#vtop"/></svg></button><button aria-label="Bottom align" class="w-[23px] rounded-sm border border-[#c2973f] bg-linear-to-b from-[#fbd98a] to-[#fee05c] pt-[5px]"><svg class="h-[10px] w-[14px]"><use href="#vtop"/></svg></button><button aria-label="Wrap" class="w-[26px]"><svg class="size-4"><use href="#wrap"/></svg></button></div>
   <div class="flex h-[22px]"><button aria-label="Left" class="w-[23px]"><svg class="h-3 w-[14px]"><use href="#al"/></svg></button><button aria-label="Center" class="w-[23px]"><svg class="h-3 w-[14px]"><use href="#ac"/></svg></button><button aria-label="Right" class="w-[23px]"><svg class="h-3 w-[14px]"><use href="#ar"/></svg></button><button aria-label="Merge" class="w-[26px]"><svg class="size-4"><use href="#merge"/></svg></button><svg class="mt-[10px] h-[3px] w-[5px]"><use href="#car"/></svg></div>
   <div class="flex h-[22px] items-center"><button aria-label="Decrease indent" class="w-[23px]"><svg class="h-[14px] w-4"><use href="#ind0"/></svg></button><button aria-label="Increase indent" class="w-[23px]"><svg class="h-[14px] w-4"><use href="#ind1"/></svg></button><i class="mx-[2px] h-5 w-px bg-[#d2d5d9]"></i><button aria-label="Orientation" class="w-[24px]"><svg class="size-4"><use href="#orient"/></svg></button><svg class="h-[3px] w-[5px]"><use href="#car"/></svg></div>
   <h2 class="pr-5">Alignment</h2><svg class="absolute right-1 bottom-[4px] size-2"><use href="#launch"/></svg>
  </div>
  <div class="w-[88px] pl-[5px]">
   <label class="flex h-[22px] w-[80px] items-center justify-between border border-[#c6c9ce] bg-white px-[3px] text-black"><input aria-label="Number format" value="General" class="w-[60px]"><svg class="h-[3px] w-[5px]"><use href="#car"/></svg></label>
   <div class="flex h-[22px] items-center text-[12px] font-bold text-[#222]"><button class="w-[22px]">$</button><button aria-label="Currencies" class="w-[11px]"><svg class="h-[3px] w-[5px]"><use href="#car"/></svg></button><button class="w-[24px] font-normal">%</button><button class="w-[24px] pb-[4px] text-[18px]">,</button></div>
   <div class="flex h-[22px] items-center"><button aria-label="More decimals" class="w-[23px]"><svg class="h-[14px] w-4"><use href="#dec0"/></svg></button><button aria-label="Fewer decimals" class="w-[23px]"><svg class="h-[14px] w-4"><use href="#dec1"/></svg></button></div>
   <h2 class="pr-4">Number</h2><svg class="absolute right-1 bottom-[4px] size-2"><use href="#launch"/></svg>
  </div>
  <div class="w-[46px] items-center"><button class="mt-[1px] flex-col"><span class="flex size-[31px] items-center justify-center rounded-sm border border-[#cdd0d4] bg-[#fafafb]"><svg class="size-[20px]"><use href="#styA"/></svg></span><span class="mt-[5px]">Styles</span><svg class="mt-1 h-[3px] w-[5px]"><use href="#car"/></svg></button></div>
  <div class="w-[80px] pl-[7px]">
   <button class="h-[22px] gap-[4px] self-start"><svg class="size-4"><use href="#cins"/></svg>Insert<svg class="h-[3px] w-[5px]"><use href="#car"/></svg></button>
   <button class="h-[22px] gap-[4px] self-start"><svg class="size-4"><use href="#cdel"/></svg>Delete<svg class="h-[3px] w-[5px]"><use href="#car"/></svg></button>
   <button class="h-[22px] gap-[4px] self-start"><svg class="size-4"><use href="#cfmt"/></svg>Format<svg class="h-[3px] w-[5px]"><use href="#car"/></svg></button>
   <h2 class="pr-2">Cells</h2>
  </div>
  <div class="w-[126px]">
   <div class="flex"><div class="ml-[7px] flex flex-col [&>button]:h-[22px] [&>button]:w-[28px] [&>button]:justify-between"><button aria-label="Sum"><svg class="h-[11px] w-[15px]"><use href="#sum"/></svg><svg class="h-[3px] w-[5px]"><use href="#car"/></svg></button><button aria-label="Fill"><svg class="h-4 w-[15px]"><use href="#filld"/></svg><svg class="h-[3px] w-[5px]"><use href="#car"/></svg></button><button aria-label="Clear"><svg class="h-[14px] w-4"><use href="#erase"/></svg><svg class="h-[3px] w-[5px]"><use href="#car"/></svg></button></div>
    <button class="w-[44px] flex-col"><svg class="mt-1 size-[30px]"><use href="#sort"/></svg><span class="mt-[4px] whitespace-nowrap">Sort &amp;</span><span class="flex items-center gap-[3px]">Filter <svg class="h-[3px] w-[5px]"><use href="#car"/></svg></span></button>
    <button class="w-[38px] flex-col"><svg class="mt-1 mb-[2px] size-[28px]"><use href="#bino"/></svg><span class="mt-[4px] whitespace-nowrap">Find &amp;</span><span class="flex items-center gap-[3px]">Select <svg class="h-[3px] w-[5px]"><use href="#car"/></svg></span></button></div>
   <h2>Editing</h2>
  </div>
  <div class="w-[65px] items-center"><button class="flex-col"><svg class="mt-[3px] size-8"><use href="#l1"/></svg><span class="mt-[3px]">32</span><span>points</span></button><h2>Ribbon H...</h2></div>
 </div>
 <!-- formula bar -->
 <div class="mt-[3px] flex h-[22px] shrink-0 border border-[#9a9ea5] bg-white font-[Lato,sans-serif] text-[14px] text-black">
  <label class="flex w-[160px] items-center pr-[8px]"><input aria-label="Name box" value="A2" class="min-w-0 flex-1 text-center indent-[-4px]"><svg class="h-[4px] w-[7px]"><use href="#car"/></svg></label>
  <div class="flex w-[85px] items-center justify-between rounded-l-full border-x border-[#9a9ea5] bg-[#dfe2e7] pr-[5px] pl-[6px]"><span class="size-2 rounded-full bg-[#b9bec6]"></span><svg class="size-[14px]"><use href="#fx"/></svg></div>
  <input aria-label="Formula" value="Chiu" class="min-w-0 flex-1 px-[7px]">
  <button aria-label="Expand" class="flex w-[16px] items-center justify-center border-l border-[#9a9ea5] bg-[#e3e6ea]"><svg class="size-2" viewBox="0 0 8 8"><path d="M1 2l3 4 3-4" stroke="#444" stroke-width="1.800" fill="none"/></svg></button>
 </div>
 <!-- grid -->
 <div class="mt-[3px] flex min-h-0 flex-1 border-t border-[#9a9ea5] bg-white">
  <div class="min-w-0 flex-1 overflow-hidden">
   <table class="w-full table-fixed border-separate border-spacing-0 font-[Lato,sans-serif] text-[14px] leading-[16px] text-black">
    <colgroup><col class="w-[26px]"><col class="w-[112px]"><col class="w-[105px]"><col class="w-[151px]"><col class="w-[40px]"><col class="w-[75px]"><col class="w-[64px]"><col class="w-[64px]"><col class="w-[64px]"><col></colgroup>
    <thead><tr id="heads" class="h-[20px]"></tr></thead>
    <tbody id="cells"></tbody>
   </table>
  </div>
  <div class="flex w-[16px] flex-col items-center border-x border-[#9a9ea5] bg-[#dadde3]"><div class="mt-px h-[7px] w-full border border-[#777] bg-white"></div><svg class="mt-[6px] h-[4px] w-[8px] rotate-180"><use href="#car"/></svg><div class="mt-[6px] flex h-[168px] w-full items-center justify-center rounded-xs border border-[#8b8f96] bg-linear-to-r from-[#f4f5f7] to-[#d3d7dd]"><svg class="size-2 rotate-90"><use href="#grip"/></svg></div><svg class="mt-auto mb-[5px] h-[4px] w-[8px]"><use href="#car"/></svg></div>
 </div>
 <div class="flex h-[17px] shrink-0 items-center border-y border-[#b5b9bf] bg-[#dfe2e7]">
  <div class="flex w-[62px] justify-around pr-[3px] [&_svg]:size-2"><button aria-label="First sheet"><svg viewBox="0 0 8 8"><path d="M1 0v8M7 0v8L3 4z" fill="#555" stroke="#555" stroke-width=".6"/></svg></button><button aria-label="Previous sheet"><svg viewBox="0 0 8 8"><path d="M6 0v8L2 4z" fill="#555"/></svg></button><button aria-label="Next sheet"><svg viewBox="0 0 8 8"><path d="M2 0v8l4-4z" fill="#555"/></svg></button><button aria-label="Last sheet"><svg viewBox="0 0 8 8"><path d="M7 0v8M1 0v8l4-4z" fill="#555" stroke="#555" stroke-width=".6"/></svg></button></div>
  <button class="h-full w-[168px] border-x border-[#a5a9b0] bg-white font-[Lato,sans-serif] text-[14px] font-bold text-[#333]">class_detail_870012520</button>
  <button aria-label="New sheet" class="ml-1 flex h-full w-[28px] items-center justify-center border-r border-[#a5a9b0]"><svg class="size-[14px]" viewBox="0 0 14 14"><path d="M4.500 3.500h8v7l-2 3h-6z" fill="#eef4fd" stroke="#4d6fb0"/><path d="M4 0v8M0 4h8M1 1l6 6M7 1L1 7" stroke="#eaa422"/></svg></button>
  <div class="ml-auto flex h-full w-[292px] items-center"><div class="h-[13px] w-[7px] rounded-xs border border-[#8b8f96] bg-white"></div><svg class="mx-[5px] h-[4px] w-[8px] rotate-90"><use href="#car"/></svg><div class="flex h-[15px] w-[212px] items-center justify-center rounded-xs border border-[#8b8f96] bg-linear-to-b from-[#f4f5f7] to-[#d3d7dd]"><svg class="size-2"><use href="#grip"/></svg></div><svg class="ml-auto h-[4px] w-[8px] -rotate-90"><use href="#car"/></svg><div class="mr-[1px] ml-[5px] h-[13px] w-[7px] rounded-xs border border-[#8b8f96] bg-white"></div></div><div class="w-[16px]"></div>
 </div>
 <footer class="flex h-[21px] shrink-0 items-center border-b border-[#777b81] bg-linear-to-b from-[#d3d6da] to-[#b5b9be] pl-2 whitespace-nowrap text-[#444]">
  <span class="h-full w-[41px] border-r border-[#92969c] pt-[3px]">Ready</span>
  <div class="ml-auto flex gap-[15px] pr-[8px]"><span>Average: 31.70243345</span><span>Count: 528</span><span>Sum: 2282.575208</span></div>
  <div class="flex h-full items-center border-l border-[#92969c] pl-1"><button aria-label="Normal view" class="flex h-[19px] w-[19px] items-center justify-center rounded-xs border border-[#c2973f] bg-[#fddc6c]"><svg class="size-[13px]" viewBox="0 0 13 13"><path d="M.5.5h12v12H.5zM0 4.500h13M0 8.500h13M4.500 0v13M8.500 0v13" fill="#fff" stroke="#555"/></svg></button>
   <button aria-label="Page layout view" class="ml-[3px]"><svg class="size-[13px]" viewBox="0 0 13 13"><path d="M.5.5h12v12H.5z" fill="#888" stroke="#555"/><path d="M3 2h7v9H3z" fill="#fff"/><path d="M4 4.500h5M4 6.500h5M4 8.500h5" stroke="#777"/></svg></button><button aria-label="Page break view" class="ml-[6px]"><svg class="size-[13px]" viewBox="0 0 13 13"><path d="M.5.5h12v12H.5z" fill="#888" stroke="#555"/><path d="M1 1h5v7H1zM7 1h5v5H7z" fill="#fff"/></svg></button>
   <span class="ml-[11px] w-[35px]">100%</span><button aria-label="Zoom out"><svg class="size-4"><use href="#minus"/></svg></button><svg class="h-4 w-[101px]" viewBox="0 0 101 16"><path d="M0 8.500h101" stroke="#7b8087"/><path d="M47 3h7v7l-3.500 3.500L47 10z" fill="#f5f6f7" stroke="#6b6e73"/></svg><button aria-label="Zoom in"><svg class="size-4"><use href="#plus"/></svg></button><svg class="mt-[8px] ml-[7px] size-3"><use href="#size"/></svg></div>
 </footer>
</section>

<!-- Word window -->
<section class="absolute top-[12px] left-[1047px] flex h-[760px] w-[833px] flex-col rounded-lg border border-[#83868b] bg-[#fcfcfc] px-[7px] pb-[7px]">
 <header class="flex h-[30px] shrink-0 items-center pt-[5px]">
  <button aria-label="Word menu"><svg class="size-4"><use href="#wd"/></svg></button><i class="mx-[5px] h-3 w-px bg-[#777]"></i>
  <button aria-label="Save" class="ml-[2px]"><svg class="size-[14px]"><use href="#save"/></svg></button>
  <button aria-label="Undo" class="ml-2 flex items-center gap-[6px]"><svg class="size-[14px]"><use href="#undo"/></svg><svg class="h-[3px] w-[5px] brightness-0"><use href="#car"/></svg></button>
  <button aria-label="Repeat" class="ml-[7px]"><svg class="size-[14px]"><use href="#repeat"/></svg></button>
  <button aria-label="Spelling" class="ml-[8px]"><svg class="size-[15px]"><use href="#abc"/></svg></button>
  <button aria-label="Print" class="ml-[7px]"><svg class="size-4"><use href="#print"/></svg></button><i class="mx-[6px] h-3 w-px bg-[#777]"></i>
  <button aria-label="Customize"><svg class="h-[7px] w-[7px]" viewBox="0 0 7 7"><path d="M0 .5h7" stroke="#222"/><path d="M0 3h7L3.500 6.500z" fill="#222"/></svg></button>
  <h1 class="ml-[66px] pb-[6px] whitespace-pre text-[#909090]">Directions to Pull Report for Career Ready 101.docx  -  Microsoft Word</h1>
  <div class="ml-auto flex gap-[23px] pr-[12px] pb-[1px]"><button aria-label="Minimize"><svg class="size-3"><use href="#wmin"/></svg></button><button aria-label="Maximize"><svg class="size-3"><use href="#wmax"/></svg></button><button aria-label="Close"><svg class="size-3"><use href="#wx"/></svg></button></div>
 </header>
 <div role="tablist" class="flex h-[24px] shrink-0 items-stretch [&>button]:shrink-0">
  <button class="mr-[4px] w-[56px] rounded-t-sm border border-[#1c468c] bg-linear-to-b from-[#2359ae] to-[#2f78dc] text-white">File</button>
  <button class="relative z-10 -mb-px w-[56px] rounded-t-sm border border-b-0 border-[#b3b7bc] bg-white">Home</button>
  <button class="w-[58px]">Insert</button><button class="w-[90px]">Page Layout</button><button class="w-[84px]">References</button><button class="w-[72px]">Mailings</button><button class="w-[64px]">Review</button><button class="w-[54px]">View</button>
  <div class="ml-auto flex items-center gap-[8px] pr-[4px]"><button aria-label="Collapse ribbon"><svg class="h-2 w-[10px]"><use href="#chev"/></svg></button><button aria-label="Help"><svg class="size-4"><use href="#help"/></svg></button></div>
 </div>
 <div class="flex h-[87px] shrink-0 border-y border-[#a3a7ad] border-b-[#83878d] bg-linear-to-b from-white via-[#fbfbfc] to-[#e6e9ec] [&_button]:flex [&_button]:shrink-0 [&_button]:items-center [&_button]:justify-center [&_h2]:mt-auto [&_h2]:h-[17px] [&_h2]:text-center [&_h2]:text-[#6b7077] [&_svg]:shrink-0 [&>div]:relative [&>div]:flex [&>div]:shrink-0 [&>div]:flex-col [&>div]:border-r [&>div]:border-[#bfc3c8] [&>div]:pt-[2px]">
  <div class="w-[72px]">
   <div class="flex"><button class="mt-[4px] ml-[8px] w-[34px] flex-col"><svg class="h-[30px] w-[26px]"><use href="#paste"/></svg><span class="mt-1">Paste</span><svg class="mt-1 h-[3px] w-[5px]"><use href="#car"/></svg></button>
    <div class="ml-[6px] flex flex-col text-[#aaa] [--c:#aaa]"><button aria-label="Cut" class="h-[22px]"><svg class="size-[14px]"><use href="#cut"/></svg></button><button aria-label="Copy" class="h-[22px]"><svg class="size-4"><use href="#copy"/></svg></button><button aria-label="Format painter" class="h-[22px]"><svg class="size-4"><use href="#brush"/></svg></button></div></div>
   <h2 class="pr-5">Clipbo...</h2><svg class="absolute right-1 bottom-[4px] size-2"><use href="#launch"/></svg>
  </div>
  <div class="w-[195px] pl-[5px]">
   <div class="flex h-[22px] text-black"><label class="flex w-[142px] items-center justify-between border border-[#c6c9ce] bg-white px-[3px]"><input aria-label="Font" value="Lucida Sans" class="w-[100px]"><svg class="h-[3px] w-[5px]"><use href="#car"/></svg></label><label class="flex w-[43px] items-center justify-between border border-l-0 border-[#c6c9ce] bg-white px-[3px]"><input aria-label="Size" value="12" class="w-[24px]"><svg class="h-[3px] w-[5px]"><use href="#car"/></svg></label></div>
   <div class="flex h-[22px] items-center font-['Liberation_Serif',serif] text-[14px] font-bold text-[#222]"><button class="w-[22px]">B</button><button class="w-[24px] italic">I</button><button class="w-[26px] underline">U</button><button aria-label="Underline styles" class="w-2"><svg class="h-[3px] w-[5px]"><use href="#car"/></svg></button><button class="w-[28px] text-[11px] line-through">abc</button><button class="w-[22px]">x<sub class="text-[8px] text-[#2f5fb8]">2</sub></button><button class="w-[22px]">x<sup class="text-[8px] text-[#2f5fb8]">2</sup></button><i class="mx-[4px] h-5 w-px bg-[#d2d5d9]"></i><button aria-label="Clear formatting" class="w-[24px]"><svg class="size-4" viewBox="0 0 16 16"><text x="0" y="8" font-size="9" font-weight="700" fill="#333">Aa</text><path d="M6 11l5-6 4 1v2l-5 7-4-1z" fill="#e4eefb" stroke="#4b6ea8"/></svg></button></div>
   <div class="flex h-[22px] items-center text-[#222]"><button aria-label="Text effects" class="w-5"><svg class="size-[17px]" viewBox="0 0 18 18"><text x="1" y="16" font-size="19" font-weight="700" fill="#fff" stroke="#5fa8dd" stroke-width="1.300">A</text></svg></button><button aria-label="Effects" class="w-[9px]"><svg class="h-[3px] w-[5px]"><use href="#car"/></svg></button><button aria-label="Highlight" class="w-[26px]"><svg class="size-[17px]" viewBox="0 0 18 18"><path d="M0 0h12v11H0z" fill="#f4f07a"/><text x="0" y="9" font-size="10" fill="#111">ab</text><path d="M8 11l7-9 3 1-6 9z" fill="#7fa6da" stroke="#3a5f9c"/><path d="M1 14h16v4H1z" fill="#ff0"/></svg></button><button aria-label="Highlights" class="w-[9px]"><svg class="h-[3px] w-[5px]"><use href="#car"/></svg></button><button aria-label="Font color" class="w-[28px]"><svg class="size-[17px]"><use href="#fcol"/></svg></button><button aria-label="Font colors" class="w-2"><svg class="h-[3px] w-[5px]"><use href="#car"/></svg></button><button class="w-[24px] font-['Liberation_Serif',serif] text-[14px] font-bold">Aa</button><svg class="h-[3px] w-[5px]"><use href="#car"/></svg><i class="mr-[4px] ml-[6px] h-5 w-px bg-[#d2d5d9]"></i><button class="w-[22px] font-['Liberation_Serif',serif] text-[16px] font-bold">A<svg class="mb-2 h-1 w-[6px]" viewBox="0 0 6 4"><path d="M0 4h6L3 0z" fill="#2f5fb8"/></svg></button><button class="w-[20px] font-['Liberation_Serif',serif] text-[12px] font-bold">A<svg class="mb-2 h-1 w-[6px]" viewBox="0 0 6 4"><path d="M0 0h6L3 4z" fill="#2f5fb8"/></svg></button></div>
   <h2 class="pr-5">Font</h2><svg class="absolute right-1 bottom-[4px] size-2"><use href="#launch"/></svg>
  </div>
  <div class="w-[161px] pl-[4px]">
   <div class="flex h-[22px] items-center"><button aria-label="Bullets" class="w-[22px]"><svg class="size-[14px]"><use href="#bul"/></svg></button><button aria-label="Bullet styles" class="w-[12px]"><svg class="h-[3px] w-[5px]"><use href="#car"/></svg></button><button aria-label="Numbering" class="h-[22px] w-[22px] rounded-l-sm border border-[#c2973f] bg-linear-to-b from-[#fbd98a] to-[#fee05c]"><svg class="size-[15px]"><use href="#num"/></svg></button><button aria-label="Numbering styles" class="h-[22px] w-[12px] rounded-r-sm border border-l-0 border-[#c2973f] bg-[#fbd98a]"><svg class="h-[3px] w-[5px]"><use href="#car"/></svg></button><button aria-label="Multilevel list" class="w-[24px]"><svg class="h-[15px] w-4"><use href="#mul"/></svg></button><svg class="h-[3px] w-[5px]"><use href="#car"/></svg><i class="mr-[5px] ml-[6px] h-5 w-px bg-[#d2d5d9]"></i><button aria-label="Decrease indent" class="w-[23px]"><svg class="h-[14px] w-4"><use href="#ind0"/></svg></button><button aria-label="Increase indent" class="w-[23px]"><svg class="h-[14px] w-4"><use href="#ind1"/></svg></button></div>
   <div class="flex h-[22px] items-center"><button aria-label="Left" class="h-[22px] w-[23px] rounded-sm border border-[#c2973f] bg-linear-to-b from-[#fbd98a] to-[#fee05c]"><svg class="h-3 w-[14px]"><use href="#al"/></svg></button><button aria-label="Center" class="w-[24px]"><svg class="h-3 w-[14px]"><use href="#ac"/></svg></button><button aria-label="Right" class="w-[23px]"><svg class="h-3 w-[14px]"><use href="#ar"/></svg></button><button aria-label="Justify" class="w-[23px]"><svg class="h-3 w-[14px]"><use href="#aj"/></svg></button><i class="mx-[4px] h-5 w-px bg-[#d2d5d9]"></i><button aria-label="Line spacing" class="gap-1 pl-[3px]"><svg class="size-[15px]"><use href="#spc"/></svg><svg class="h-[3px] w-[5px]"><use href="#car"/></svg></button></div>
   <div class="flex h-[22px] items-center"><button aria-label="Shading" class="w-[24px] [--c:#fff] [--s:#777]"><svg class="size-[17px]"><use href="#bucket"/></svg></button><button aria-label="Shadings" class="w-[8px]"><svg class="h-[3px] w-[5px]"><use href="#car"/></svg></button><button aria-label="Borders" class="w-[26px]"><svg class="size-[14px]"><use href="#bord"/></svg></button><button aria-label="Border styles" class="w-[8px]"><svg class="h-[3px] w-[5px]"><use href="#car"/></svg></button><i class="mx-[5px] h-5 w-px bg-[#d2d5d9]"></i><button aria-label="Sort" class="w-[20px]"><svg class="h-4 w-[15px]"><use href="#az"/></svg></button><i class="mx-[6px] h-5 w-px bg-[#d2d5d9]"></i><button class="w-[20px] text-[16px] font-bold">¶</button></div>
   <h2 class="pr-4">Paragraph</h2><svg class="absolute right-1 bottom-[4px] size-2"><use href="#launch"/></svg>
  </div>
  <div class="w-[291px] pl-[6px]">
   <div class="flex pt-[3px]">
    <div class="flex h-[60px] w-[218px] border border-[#b9bdc2] bg-white [&>button]:w-[71px] [&>button]:flex-col [&>button]:items-start [&>button]:pl-[7px]"><button><span class="flex h-[28px] w-[59px] items-center overflow-hidden text-[13px] text-black">AaBbCcDc</span><span class="self-center">¶ Normal</span></button><button><span class="flex h-[28px] w-[59px] items-center overflow-hidden text-[13px] text-black">AaBbCcDc</span><span class="self-center whitespace-nowrap">¶ No Spaci...</span></button><button><span class="flex h-[28px] w-[59px] items-center overflow-hidden font-['Liberation_Serif',serif] text-[17px] font-bold text-[#365f91]">AaBbCc</span><span class="self-center">Heading 1</span></button></div>
    <div class="flex h-[60px] w-[14px] flex-col border border-l-0 border-[#b9bdc2] [&>button]:flex-1 [&>button]:border-b [&>button]:border-[#b9bdc2]"><button aria-label="Up"><svg class="h-[3px] w-[5px] rotate-180 opacity-40"><use href="#car"/></svg></button><button aria-label="Down"><svg class="h-[3px] w-[5px]"><use href="#car"/></svg></button><button aria-label="More"><svg class="h-[5px] w-[7px]" viewBox="0 0 7 6"><path d="M0 .5h7" stroke="#444"/><path d="M0 2.500h7L3.500 6z" fill="#444"/></svg></button></div>
    <button class="w-[51px] flex-col self-start"><svg class="size-[30px]" viewBox="0 0 30 30"><text x="0" y="19" font-size="24" font-weight="700" fill="#fff" stroke="#b144b4" stroke-width="1.500">A</text><text x="10" y="28" font-family="Liberation Serif" font-size="28" font-weight="700" fill="#4c8ae0">A</text></svg><span class="mt-[3px]">Change</span><span class="flex items-center gap-1">Styles<svg class="h-[3px] w-[5px]"><use href="#car"/></svg></span></button>
   </div>
   <h2 class="pr-[20px]">Styles</h2><svg class="absolute right-1 bottom-[4px] size-2"><use href="#launch"/></svg>
  </div>
  <div class="w-[44px] items-center"><button class="mt-[1px] flex-col"><span class="flex size-[31px] items-center justify-center rounded-sm border border-[#cdd0d4] bg-[#fafafb]"><svg class="size-4"><use href="#bino"/></svg></span><span class="mt-[5px]">Editing</span><svg class="mt-1 h-[3px] w-[5px]"><use href="#car"/></svg></button></div>
  <div class="w-[52px] items-center"><button class="flex-col"><svg class="mt-[3px] size-8"><use href="#l1"/></svg><span class="mt-[3px]">32</span><span>points</span></button><h2>Ribbo...</h2></div>
 </div>
 <div class="flex min-h-0 flex-1 border-x border-[#83878d] bg-[#cbcfd4]">
  <!-- vertical ruler -->
  <div class="flex w-[25px] shrink-0 flex-col"><div class="mt-[3px] flex h-[24px] shrink-0 items-center justify-center border border-[#8b8f96] bg-[#d8dbe0]"><span class="flex size-[15px] items-center justify-center border border-[#8b8f96] bg-white text-[11px] font-bold">L</span></div>
   <svg class="ml-[5px] min-h-0 w-[14px] flex-1 border-x border-[#8b8f96] bg-[#f6f6f6]"><rect width="12" height="26" fill="#c6cace"/><path d="M0 26h12" stroke="#8b8f96"/><g transform="translate(0 23)"><rect width="12" y="5" height="600" fill="url(#pV)"/><g font-size="9" fill="#444" text-anchor="middle"><text transform="translate(9 91) rotate(-90)">1</text><text transform="translate(9 182) rotate(-90)">2</text></g></g></svg></div>
  <div class="flex min-w-0 flex-1 flex-col">
   <svg class="h-[27px] w-full shrink-0" viewBox="0 0 775 27" preserveAspectRatio="xMinYMin slice"><rect x="16.500" y="8.500" width="764" height="12" fill="#c6cace" stroke="#8b8f96"/><rect x="64" y="9" width="681" height="11" fill="#f6f6f6"/><g transform="translate(63 9)"><rect x="-45" width="757" height="12" fill="url(#pRuler)"/></g><g transform="translate(63 23)"><rect x="91" width="640" height="3" fill="url(#pTabs)"/></g><g font-size="9" fill="#444" text-anchor="middle"><text x="154" y="18">1</text><text x="245" y="18">2</text><text x="336" y="18">3</text><text x="427" y="18">4</text><text x="518" y="18">5</text><text x="609" y="18">6</text><text x="700" y="18">7</text></g><path d="M81 5.500h9v3l-4.500 4-4.500-4zM104.500 20v-3l4.500-4 4.500 4v3zM104.500 21h9v5h-9zM741 20v-3l4-4 4 4v3z" fill="#f0f0f0" stroke="#777"/><path d="M121 15v5h4" fill="none" stroke="#333" stroke-width="2"/></svg>
   <div class="flex min-h-0 flex-1">
    <div class="w-[17px] shrink-0 bg-linear-to-r from-[#cbcfd4] to-[#8c9096]"></div>
    <article class="min-w-0 flex-1 overflow-hidden bg-white pl-[51px] font-['Open_Sans',sans-serif] text-[16px] leading-[18px] text-black [&>p]:whitespace-pre">
     <p class="mt-[94px] ml-[18px]">14.  You now want to sort students alphabetically  by last name for ease of inputting</p>
     <p class="ml-[41px]">grades.  To do this you first need to highlight  the entire section.  Then you want to</p>
     <p class="ml-[41px]">select the Sort &amp; filter button.  It looks like this:</p>
     <figure class="mt-[21px] ml-[90px] h-[97px] w-[73px] border-4 border-black bg-linear-to-b from-white to-[#e6e9ec] pt-[8px] pl-[19px] text-[11px] leading-[13px] whitespace-pre text-[#777] shadow-[3px_3px_4px_#999]"><svg class="size-[30px]"><use href="#sort"/></svg><p class="mt-[6px] ml-[23px]">&amp;  F</p><p class="ml-[26px]">▾ S</p><p class="mt-[5px] ml-[23px]">ing</p></figure>
     <p class="mt-[30px] ml-[127px]">to select <u>Custom Sort</u> from the drop down list and Sort box will appear.</p>
     <p class="ml-[136px]">select</p>
     <p class="ml-[127px]">ment should look similar to the picture below.  You can now print your</p>
     <p class="ml-[136px]">you want.  Don't forget to save</p>
     <figure class="relative mt-[20px] w-[652px] border-4 border-black bg-white font-[Lato,sans-serif] text-[12px] leading-[14px] shadow-[3px_3px_4px_#999]">
      <div class="flex h-[43px] bg-linear-to-b from-[#fafafa] to-[#e3e6ea] pl-[132px] font-['Open_Sans',sans-serif] text-[10px] leading-[12px] text-[#555] [&>div]:flex [&>div]:flex-col [&>div]:border-r [&>div]:border-[#bbb] [&>div]:text-center">
       <div class="w-[72px]"><div class="flex gap-px pt-px"><span class="w-[36px]">Custom Views</span><span class="w-[34px]">Full Screen</span></div></div>
       <div class="w-[142px]"><div class="flex gap-[3px] pt-[4px] pl-[6px]"><input id="gl" type="checkbox" checked class="size-[11px] accent-[#8a8d92]"><label for="gl" class="mr-1">Gridlines</label><input id="hd" type="checkbox" checked class="size-[11px] accent-[#8a8d92]"><label for="hd">Headings</label></div><span class="mt-auto pb-[2px]">Show</span></div>
       <div class="w-[118px]"><div class="flex justify-between px-[5px] pt-px"><span>Zoom</span><span>100%</span><span class="w-[44px]">Zoom to Selection</span></div><span class="mt-auto pb-[2px]">Zoom</span></div>
       <div class="w-[174px]"><div class="flex justify-between px-[3px] pt-px"><span class="w-[40px]">New Window</span><span class="w-[38px]">Arrange All</span><span class="w-[36px]">Freeze Panes</span><span class="flex items-center gap-px pt-[6px] text-[#aaa]"><i class="h-[10px] w-[11px] border border-t-2 border-[#999]"></i>Unhide</span></div></div>
      </div>
      <div class="flex h-[26px] items-center border-y-2 border-[#b9bdc3] bg-[#dfe2e7]"><span class="ml-[134px] size-2 rounded-full bg-[#b9bec6]"></span><svg class="ml-[41px] size-[14px]"><use href="#fx"/></svg><span class="ml-[2px] flex h-full flex-1 items-center border-l border-[#aaa] bg-white pl-[6px] text-[14px]">student_id</span></div>
      <table class="w-full table-fixed border-separate border-spacing-0 leading-[12px] whitespace-nowrap [&_td]:border-r [&_td]:border-b [&_td]:border-[#222] [&_td]:px-px [&_th]:border-r [&_th]:border-b-2 [&_th]:border-[#a3782a] [&_th]:font-normal">
       <colgroup><col class="w-[21px]"><col class="w-[69px]"><col class="w-[94px]"><col class="w-[78px]"><col class="w-[253px]"><col class="w-[33px]"><col class="w-[61px]"><col></colgroup>
       <tbody>
       <tr class="h-[20px] bg-[#fbd760] text-[#5a4614]"><th></th><th>A</th><th>B</th><th>C</th><th>D</th><th>E</th><th>F</th><th>G</th></tr>
       <tr class="h-[17px] bg-[#b6daff] [&>td]:border-r-0! [&>td]:border-b-2!"><td></td><td></td><td></td><td>fname</td><td>lesson</td><td>score</td><td>accumtime</td><td></td></tr>
       <tr class="h-[19px]"><td class="bg-[#dfe3e8] text-[11px]">146</td><td class="text-[11px]">KTS70080159</td><td>Aparicio</td><td>Mia</td><td>Customer Service</td><td></td><td></td><td></td></tr>
       <tr class="h-[18px]"><td class="bg-[#dfe3e8] text-[11px]">147</td><td class="text-[11px]">KTS70080159</td><td>Aparicio</td><td>Mia</td><td>Time Management</td><td></td><td></td><td></td></tr>
       <tr class="h-[18px]"><td class="bg-[#dfe3e8] text-[11px]">148</td><td class="text-[11px]">KTS70080159</td><td>Aparicio</td><td>Mia</td><td>Career Clusters</td><td class="text-right">75</td><td class="text-right">1:39:14</td><td></td></tr>
       </tbody>
      </table>
      <svg class="absolute right-[16px] bottom-[-38px] h-[70px] w-[120px]" viewBox="0 0 120 70"><ellipse cx="60" cy="32" rx="48" ry="30" fill="none" stroke="#f00" stroke-width="3"/></svg>
     </figure>
    </article>
   </div>
  </div>
  <div class="flex w-[17px] shrink-0 flex-col items-center bg-[#dadde3]"><div class="mt-[3px] h-[6px] w-full shrink-0 border border-[#8b8f96] bg-[#dfe2e7]"></div><div class="flex h-[17px] w-full shrink-0 items-center justify-center border border-[#8b8f96] bg-[#e8eaed]"><svg class="size-3"><use href="#wres"/></svg></div><svg class="mt-[7px] h-[4px] w-[8px] shrink-0 rotate-180"><use href="#car"/></svg><div class="mt-[243px] flex h-[122px] w-[16px] shrink-0 items-center justify-center rounded-xs border border-[#8b8f96] bg-linear-to-r from-[#f4f5f7] to-[#d3d7dd]"><svg class="size-2 rotate-90"><use href="#grip"/></svg></div><svg class="mt-auto h-[4px] w-[8px] shrink-0"><use href="#car"/></svg><svg class="mt-[5px] h-[52px] w-[16px] shrink-0" viewBox="0 0 16 52"><path d="M0 .5h16" stroke="#a5a9b0"/><path d="M5 8l3-3 3 3zM5 12l3-3 3 3zM5 40l3 3 3-3zM5 44l3 3 3-3z" fill="#444"/><circle cx="8" cy="25" r="2.500" fill="none" stroke="#444"/></svg></div>
 </div>
 <div class="flex h-[17px] shrink-0 items-center border-x border-[#83878d] bg-[#dadde3] pr-[20px] pl-[4px]"><svg class="h-[4px] w-[8px] rotate-90"><use href="#car"/></svg><div class="ml-[5px] flex h-[16px] w-[730px] items-center justify-center rounded-xs border border-[#8b8f96] bg-linear-to-b from-[#f4f5f7] to-[#d3d7dd]"><svg class="size-2"><use href="#grip"/></svg></div><svg class="ml-auto h-[4px] w-[8px] -rotate-90"><use href="#car"/></svg></div>
 <footer class="flex h-[23px] shrink-0 items-center border-y border-[#777b81] bg-linear-to-b from-[#d3d6da] to-[#b5b9be] pl-2 whitespace-nowrap text-[#444]">
  <span class="w-[79px]">Page: 2 of 2</span><span class="w-[66px]">Words: 368</span><div class="flex h-full items-center border-x border-[#92969c] px-2"><svg class="size-[18px]" viewBox="0 0 18 18"><path d="M1 9l8-4 8 4-7 8z" fill="#eef3fb" stroke="#5a76a8"/><path d="M5 8l4 4 6-9" stroke="#2f5fc0" stroke-width="2.500" fill="none"/></svg></div>
  <div class="ml-auto flex h-full items-center gap-[8px] border-l border-[#92969c] pl-[4px] [&_path]:stroke-[#555]"><button aria-label="Print layout" class="flex size-[19px] items-center justify-center rounded-xs border border-[#c2973f] bg-[#fddc6c]"><svg class="size-3" viewBox="0 0 12 12"><path d="M.5.5h11v11H.5zM2.500 3.500h7M2.500 6h7M2.500 8.500h7" fill="#fff"/></svg></button><button aria-label="Reading"><svg class="size-3" viewBox="0 0 12 12"><path d="M.5 1.500L6 3l5.500-1.500v8L6 11 .5 9.500zM6 3v8M2 4.500l2.500.5M2 7l2.500.5M7.500 5l2.500-.5M7.500 7.500L10 7" fill="#fff"/></svg></button><button aria-label="Web layout"><svg class="size-[13px]" viewBox="0 0 13 13"><path d="M.5.5h9v10h-9zM2 3h6M2 5.500h6M2 8h4" fill="#fff"/><circle cx="9.500" cy="9.500" r="3" fill="#2f7fb8"/></svg></button><button aria-label="Outline"><svg class="size-[10px]" viewBox="0 0 10 10"><path d="M0 .5h8M2 3.500h8M2 6.500h8M2 9.500h8"/></svg></button><button aria-label="Draft"><svg class="size-[10px]" viewBox="0 0 10 10"><path d="M0 .5h10M0 3.500h10M0 6.500h10M0 9.500h10"/></svg></button></div>
  <span class="ml-[12px] w-[29px]">95%</span><button aria-label="Zoom out"><svg class="size-4"><use href="#minus"/></svg></button><svg class="h-4 w-[100px]" viewBox="0 0 100 16"><path d="M0 8.500h100" stroke="#7b8087"/><path d="M44 3h7v7l-3.500 3.500L44 10z" fill="#f5f6f7" stroke="#6b6e73"/></svg><button aria-label="Zoom in"><svg class="size-4"><use href="#plus"/></svg></button><svg class="mt-[8px] ml-[7px] size-3"><use href="#size"/></svg>
 </footer>
</section>

<!-- Sort dialog -->
<dialog open class="absolute top-[400px] left-[687px] m-0 flex h-[275px] w-[600px] flex-col rounded-t-lg border border-[#15232f] bg-linear-to-b from-[#93b1d2] to-[#bad2ec] to-15% px-[7px] pb-[6px] text-black shadow-[inset_0_0_0_1px_#8fdcf3,2px_3px_5px_#0006]">
 <header class="flex h-[29px] shrink-0 items-center pt-[6px]"><h1 class="ml-[4px]">Sort</h1>
  <button aria-label="Help" class="ml-auto flex h-[17px] w-[31px] items-center justify-center rounded-sm border border-[#54718f] bg-linear-to-b from-[#c8daee] to-[#9fbbdb] text-[12px] font-bold text-[#333]">?</button><button aria-label="Close" class="mr-[2px] ml-[2px] flex h-[17px] w-[31px] items-center justify-center rounded-sm border border-[#5b1a14] bg-linear-to-b from-[#e2a195] via-[#c4412c] to-[#c9604c]"><svg class="size-[11px]"><use href="#wx"/></svg></button></header>
 <div class="flex min-h-0 flex-1 flex-col bg-[#f0f0f0] px-[6px] pt-[8px] pb-[8px]">
  <div class="flex h-[24px] items-stretch gap-[4px] whitespace-nowrap [&_button]:flex [&_button]:items-center [&_button]:justify-center [&_button]:rounded-[3px] [&_button]:border [&_button]:border-[#707070] [&_button]:bg-linear-to-b [&_button]:from-[#f2f2f2] [&_button]:via-[#e9e9e9] [&_button]:to-[#cfcfcf]">
   <button class="ml-px w-[83px] gap-[2px]"><svg class="size-4" viewBox="0 0 16 16"><path d="M3 1h2v2h2v2H5v2H3V5H1V3h2z" fill="#ffe14a" stroke="#a58418" stroke-width=".7"/><text x="7" y="9" font-size="7" font-weight="700" fill="#2b5fc0">A</text><text x="7" y="16" font-size="7" font-weight="700" fill="#a32a22">Z</text><path d="M14 6v9m-1.500-2l1.500 2 1.500-2" stroke="#222" fill="none"/></svg><span><u>A</u>dd Level</span></button>
   <button class="w-[95px] gap-[4px]"><svg class="size-3" viewBox="0 0 12 12"><path d="M1 1l10 10M11 1L1 11" stroke="#222" stroke-width="1.800"/></svg><span><u>D</u>elete Level</span></button>
   <button class="w-[89px] gap-[3px]"><svg class="size-4"><use href="#copy"/></svg><span><u>C</u>opy Level</span></button>
   <i class="-mx-[2px] w-px bg-black"></i>
   <button aria-label="Move up" class="w-[24px] border-[#b5b5b5]!"><svg class="h-[5px] w-[9px] rotate-180 opacity-60"><use href="#car"/></svg></button><button aria-label="Move down" class="w-[24px] border-[#b5b5b5]!"><svg class="h-[5px] w-[9px] opacity-60"><use href="#car"/></svg></button>
   <button class="w-[67px]"><span><u>O</u>ptions...</span></button>
   <label class="mr-[2px] ml-auto flex items-center gap-[5px]"><input type="checkbox" class="size-[13px] appearance-none border border-[#8e8f8f] bg-linear-to-br from-[#d5d9de] to-white"><span>My data has <u>h</u>eaders</span></label>
  </div>
  <div class="mt-[4px] h-[169px] border border-[#828790] bg-white">
   <div class="flex h-[20px] items-center border-b border-[#dcdcdc] bg-linear-to-b from-white to-[#f4f4f5] pt-px [&>span]:border-r [&>span]:border-[#e2e3e6] [&>span]:pl-[4px]"><span class="w-[193px]">Column</span><span class="w-[192px]">Sort On</span><span class="w-[184px]">Order</span></div>
   <div class="mx-[1px] flex h-[24px] items-start bg-[#e0e0e6] pt-[2px]">
    <label for="by" class="w-[51px] pl-[1px]">Sort by</label>
    <div class="relative mr-[11px] w-[132px]"><select id="by" class="h-[21px] w-full appearance-none border border-[#a5a8ad] bg-white"><option></option></select><span class="pointer-events-none absolute top-[2px] right-[1px] flex h-[17px] w-[17px] items-center justify-center border border-[#3c7fb1] bg-[#bfe4f9]"><svg class="h-[4px] w-[7px] brightness-0"><use href="#car"/></svg></span>
     <ul role="listbox" class="absolute top-[21px] left-0 z-10 w-[132px] border border-[#646464] bg-white pb-px text-[11px] leading-[13px] [&>li]:pl-px"><li class="outline-1 -outline-offset-1 outline-dotted outline-[#a36a2c] bg-[#8ac1ff]">Column A</li><li>Column B</li><li>Column C</li><li>Column D</li><li>Column E</li></ul></div>
    <div class="relative mr-[11px] w-[181px]"><select aria-label="Sort on" class="h-[21px] w-full appearance-none border border-[#a5a8ad] bg-white pl-[3px]"><option>Values</option></select><span class="pointer-events-none absolute top-[2px] right-[2px] flex h-[17px] w-[17px] items-center justify-center border border-[#707070] bg-[#e6e6e6]"><svg class="h-[4px] w-[7px] brightness-0"><use href="#car"/></svg></span></div>
    <div class="relative w-[181px]"><select aria-label="Order" class="h-[21px] w-full appearance-none border border-[#a5a8ad] bg-white pl-[3px]"><option>A to Z</option></select><span class="pointer-events-none absolute top-[2px] right-[2px] flex h-[17px] w-[17px] items-center justify-center border border-[#707070] bg-[#e6e6e6]"><svg class="h-[4px] w-[7px] brightness-0"><use href="#car"/></svg></span></div>
   </div>
  </div>
  <div class="mt-[3px] flex justify-end gap-[11px]"><button class="h-[21px] w-[73px] rounded-[3px] border border-[#3c7fb1] bg-linear-to-b from-[#f2f2f2] to-[#cfcfcf] shadow-[inset_0_0_0_1px_#48d0f0]">OK</button><button class="h-[21px] w-[74px] rounded-[3px] border border-[#707070] bg-linear-to-b from-[#f2f2f2] to-[#cfcfcf]">Cancel</button></div>
 </div>
 <svg class="absolute right-[8px] bottom-[8px] size-[10px]"><use href="#size"/></svg>
</dialog>

<script>
const lessons = ['Employer Expectations','Workplace Ethics','Teamwork','Problem Solving','Customer Service','Time Management','Career Clusters','Exploring Careers'];
const students = [
  ['Chiu','Amy','100','1:03:34',''],
  ['Apreza','Gabriela','50','1:29:49','1:20:06'],
  ['Bravo','Enrique','75','2:04:07','0:59:19'],
  ['Cabanayan','Matthew-Philip','75','1:40:41','0:18:21'],
  ['Cervantes','Erika','','','']
];
const hd = 'border-r border-b text-center font-normal text-[#444] ';
const sel = 'border-[#be8d2a] bg-linear-to-b from-[#ffd25a] to-[#ffed6e]';
const off = 'border-[#9fa4ab] bg-[#dfe3e8]';
document.getElementById('heads').innerHTML =
  `<th class="${hd}${off}"><svg class="ml-auto mr-1 size-[11px]" viewBox="0 0 11 11"><path d="M11 0v11H0z" fill="#b9bec5"/></svg></th>` +
  'ABCDEFGH'.split('').map((c, i) => `<th class="${hd}${i < 5 ? sel : off}">${c}</th>`).join('') + `<th class="${hd}${off}"></th>`;
const blank = '<td class="border-r border-b border-[#d5d8dc]"></td><td class="border-r border-b border-[#d5d8dc] border-r-black [border-right-style:dashed]"></td><td class="border-r border-b border-[#d5d8dc]"></td><td class="border-b border-[#d5d8dc]"></td>';
let html = `<tr class="h-[20px]"><th class="${hd}${off}">1</th>` +
  ['lname','fname','lesson','score','accumtime'].map(t => `<td class="border-r border-b-[3px] border-black [border-bottom-style:double] pt-px pl-[2px] whitespace-nowrap leading-[16px]">${t}</td>`).join('') + blank + '</tr>';
for (let r = 2; r <= 37; r++) {
  const s = students[Math.floor((r - 2) / 8)], k = (r - 2) % 8;
  const vals = [s[0], s[1], lessons[k], k === 6 ? s[2] : '', k === 6 ? s[3] : k === 7 ? s[4] : ''];
  html += `<tr class="h-[20px]"><th class="border-r border-b border-[#be8d2a] bg-[#ffd75d] font-normal text-[#444]">${r}</th>` +
    vals.map((v, i) => `<td class="border-b border-[#14365e] px-[2px] whitespace-nowrap ${r === 2 && i === 0 ? 'bg-white' : 'bg-[#b6daff]'} ${i === 4 ? 'border-r-[3px] border-r-black [border-right-style:double]' : 'border-r'} ${i > 2 ? 'text-right' : ''} ${i === 4 ? 'pr-0!' : ''}">${v}</td>`).join('') + blank + '</tr>';
}
document.getElementById('cells').innerHTML = html;
</script>
</body>
</html>
